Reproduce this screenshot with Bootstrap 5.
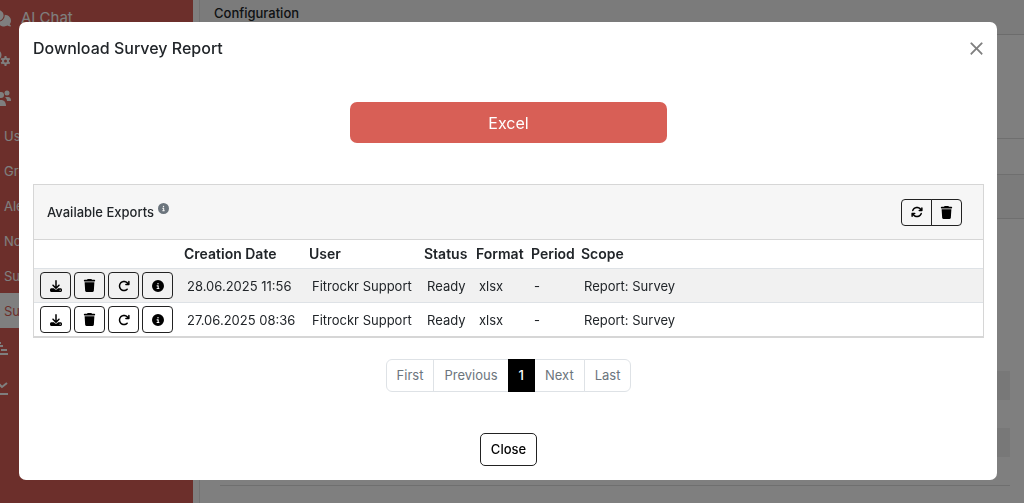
<!DOCTYPE html>
<html lang="en">
<head>
<meta charset="utf-8">
<meta name="viewport" content="width=device-width, initial-scale=1">
<title>Download Survey Report</title>
<link href="https://cdn.jsdelivr.net/npm/bootstrap@5.3.0/dist/css/bootstrap.min.css" rel="stylesheet">
<style>
  :root { --brand: #d85f56; }
  body { font-family: Inter, "Liberation Sans", sans-serif; font-size: 13px; line-height: 20px; overflow: hidden; }
  svg { fill: currentColor; display: block; }

  .side { width: 193px; min-height: calc(100vh + 2px); margin-top: -2px; background: var(--brand); }
  .side a { display: flex; align-items: center; white-space: nowrap; color: #fff; text-decoration: none; }
  .side .top-item { height: 40px; font-size: 15px; gap: 10px; margin-left: -10px; }
  .side .sub-item { height: 35px; padding-left: 4px; }
  .side .sub-item.active { background: #fff; color: var(--brand); }

  .page-card { border-left: 1px solid #e4e4e4; margin-left: 6px; }
  .page-head { background: #f7f7f7; border-bottom: 1px solid #d9d9d9; height: 35px; padding: 3px 14px; font-weight: 500; }
  .pane-a { height: 104px; border-bottom: 1px solid #dfdfdf; }
  .pane-b { height: 36px; border-bottom: 1px solid #dfdfdf; }
  .pane-c { height: 44px; background: #f7f7f7; border-bottom: 1px solid #dfdfdf; }
  .back-list { margin: 152px 14px 0 20px; border-bottom: 1px solid #dfdfdf; }
  .back-list div { height: 28px; }
  .back-list div:nth-child(odd) { background: #f0f0f0; height: 29px; }

  .survey-modal { padding: 22px 27px 0 19px; }
  .survey-modal .modal-dialog { max-width: none; margin: 0; }
  .survey-modal .modal-content { border: 0; border-radius: 7px; }
  .survey-modal .modal-header { border: 0; padding: 14px 13px 14px 14px; }
  .survey-modal .modal-title { font-size: 16px; line-height: 24px; font-weight: 500; }
  .survey-modal .btn-close { padding: 0; margin: 0; width: 15px; height: 15px; background-size: 15px; }
  .survey-modal .modal-body { padding: 28px 13px 14px 14px; }

  .btn-excel { width: 33.4%; height: 41px; background: var(--brand); color: #fff; border-radius: 7px; font-size: 16px; padding: 0; margin-bottom: 41px; }
  .btn-excel:hover { background: #c6524a; color: #fff; }
  .btn-line { border: 1px solid #222; color: #000; background: transparent; border-radius: 4px; }
  .btn-line:hover { background: #000; color: #fff; }
  .btn-tool { width: 31px; height: 27px; padding: 0; display: inline-flex; align-items: center; justify-content: center; }
  .acts { gap: 3px; }

  .exports { border: 1px solid #d6d6d6; border-bottom-width: 2px; }
  .exports-head { background: #f6f6f6; border-bottom: 1px solid #d6d6d6; height: 55px; padding: 0 21px 0 13px; font-weight: 500; }
  .info-mark { color: #6c757d; margin-top: -8px; }
  .exports table { --bs-table-striped-bg: #f1f1f1; table-layout: fixed; }
  .exports th { padding: 4px 3px; font-size: 14px; font-weight: 600; white-space: nowrap; border-color: #dee2e6; }
  .exports td { padding: 3px 6px; white-space: nowrap; vertical-align: middle; border-color: #dee2e6; }
  .exports tbody tr:last-child td { border-bottom: 0; }

  .pagination { --bs-pagination-padding-x: 10px; --bs-pagination-padding-y: 6px; --bs-pagination-font-size: 13px;
    --bs-pagination-border-radius: 6px; --bs-pagination-active-bg: #000; --bs-pagination-active-border-color: #000;
    --bs-pagination-disabled-bg: #fff; --bs-pagination-disabled-color: #6c757d; --bs-pagination-border-color: #dee2e6;
    --bs-pagination-disabled-border-color: #dee2e6; line-height: 19px; margin: 21px 0 41px; }
  .pagination .active { font-weight: 500; }
  .btn-close-modal { font-size: 13px; line-height: 19px; padding: 6px 10px; font-weight: 500; border-radius: 5px; }
</style>
</head>
<body>
<svg width="0" height="0" class="position-absolute" aria-hidden="true">
  <symbol id="i-download" viewBox="0 0 512 512"><path d="M288 32c0-17.700-14.300-32-32-32s-32 14.300-32 32V274.700l-73.400-73.400c-12.500-12.500-32.800-12.500-45.300 0s-12.500 32.800 0 45.300l128 128c12.500 12.500 32.800 12.500 45.300 0l128-128c12.500-12.500 12.500-32.800 0-45.300s-32.800-12.500-45.300 0L288 274.700V32zM64 352c-35.300 0-64 28.700-64 64v32c0 35.300 28.700 64 64 64H448c35.300 0 64-28.700 64-64V416c0-35.300-28.700-64-64-64H346.500l-45.300 45.300c-25 25-65.500 25-90.500 0L165.500 352H64zm368 56a24 24 0 1 1 0 48 24 24 0 1 1 0-48z"/></symbol>
  <symbol id="i-trash" viewBox="0 0 448 512"><path d="M135.200 17.700L128 32H32C14.300 32 0 46.300 0 64S14.300 96 32 96H416c17.700 0 32-14.300 32-32s-14.300-32-32-32H320l-7.200-14.300C307.400 6.800 296.300 0 284.200 0H163.800c-12.100 0-23.200 6.800-28.600 17.700zM416 128H32L53.200 467c1.600 25.300 22.600 45 47.900 45H346.900c25.300 0 46.300-19.700 47.900-45L416 128z"/></symbol>
  <symbol id="i-redo" viewBox="0 0 512 512"><path d="M386.300 160H336c-17.700 0-32 14.300-32 32s14.300 32 32 32H464c17.700 0 32-14.300 32-32V64c0-17.700-14.300-32-32-32s-32 14.300-32 32v51.200L414.400 97.600c-87.500-87.500-229.300-87.500-316.800 0s-87.500 229.300 0 316.800s229.300 87.500 316.800 0c12.500-12.500 12.500-32.800 0-45.300s-32.800-12.500-45.300 0c-62.500 62.500-163.800 62.500-226.300 0s-62.500-163.800 0-226.300s163.800-62.500 226.300 0L386.300 160z"/></symbol>
  <symbol id="i-info" viewBox="0 0 512 512"><path d="M256 512A256 256 0 1 0 256 0a256 256 0 1 0 0 512zM216 336h24V272H216c-13.300 0-24-10.700-24-24s10.700-24 24-24h48c13.300 0 24 10.700 24 24v88h8c13.300 0 24 10.700 24 24s-10.700 24-24 24H216c-13.300 0-24-10.700-24-24s10.700-24 24-24zm40-208a32 32 0 1 1 0 64 32 32 0 1 1 0-64z"/></symbol>
  <symbol id="i-sync" viewBox="0 0 512 512"><path d="M105.100 202.600c7.700-21.800 20.200-42.300 37.800-59.800c62.500-62.500 163.800-62.500 226.300 0L386.300 160H352c-17.700 0-32 14.300-32 32s14.300 32 32 32H463.900c17.700 0 32-14.300 32-32V80c0-17.700-14.300-32-32-32s-32 14.300-32 32v35.200L414.400 97.600c-87.500-87.500-229.300-87.500-316.800 0C73.200 122 55.600 150.700 44.800 181.400c-5.900 16.700 2.900 34.900 19.500 40.800s34.900-2.900 40.800-19.500zM39 289.300c-5 1.500-9.800 4.200-13.700 8.200c-4 4-6.700 8.800-8.100 14c-.3 1.200-.6 2.500-.8 3.800c-.3 1.700-.4 3.400-.4 5.100V432c0 17.700 14.300 32 32 32s32-14.300 32-32V396.900l17.600 17.500c87.500 87.400 229.300 87.400 316.700 0c24.400-24.400 42.100-53.100 52.900-83.700c5.900-16.700-2.900-34.900-19.500-40.800s-34.900 2.900-40.800 19.500c-7.700 21.800-20.200 42.300-37.800 59.800c-62.500 62.500-163.800 62.500-226.300 0l-.1-.1L125.600 352H160c17.700 0 32-14.300 32-32s-14.300-32-32-32H48.400c-1.600 0-3.200 .1-4.800 .3s-3.100 .5-4.600 1z"/></symbol>
  <symbol id="i-chat" viewBox="0 0 640 512"><path d="M208 352c114.900 0 208-78.800 208-176S322.900 0 208 0S0 78.800 0 176c0 38.600 14.700 74.300 39.600 103.400c-3.500 9.400-8.700 17.700-14.200 24.700L7 323c-6 4-8 11-6 18s8 11 15 11c21.800 0 43.800-5.600 62.100-12.500c9.200-3.500 17.800-7.400 25.300-11.400C134.100 343.300 169.800 352 208 352zM448 176c0 112.300-99.100 196.900-216.500 207C255.800 457.400 336.400 512 432 512c38.200 0 73.900-8.700 104.700-23.900c7.500 4 16 7.900 25.200 11.400c18.300 6.900 40.300 12.500 62.100 12.500c6.900 0 13.100-4.500 15.200-11.100c2.100-6.600-.2-13.800-5.800-17.900l-18.900-18.900c-5.500-7-10.700-15.400-14.200-24.700c24.900-29 39.600-64.700 39.600-103.400c0-92.800-84.900-168.900-192.600-175.500c.4 5.100 .6 10.300 .6 15.500z"/></symbol>
</svg>

<div class="d-flex">
  <nav class="side flex-shrink-0" aria-label="Main">
    <a class="top-item" href="#"><svg width="21" height="18"><use href="#i-chat"/></svg>AI Chat</a>
    <a class="top-item" href="#" aria-label="Settings">
      <svg width="20" height="22" viewBox="0 0 20 20"><circle cx="6" cy="7" r="4" fill="none" stroke="currentColor" stroke-width="3"/><circle cx="15.500" cy="13" r="2.500" fill="none" stroke="currentColor" stroke-width="2"/><path d="M14.500 8h2v3h-2zM14.500 15h2v3h-2z M10.700 11.400l1-1.700 2.300 1.300-1 1.700zM17 15l1-1.700 2.300 1.300-1 1.700zM10.700 14.600l1 1.700 2.300-1.300-1-1.700zM17 11l1 1.700 2.300-1.300-1-1.700z"/></svg></a>
    <a class="top-item" href="#" aria-label="Administration">
      <svg width="21" height="18" viewBox="0 0 21 18"><circle cx="17" cy="4" r="2.500"/><circle cx="11" cy="6" r="3"/><path d="M3 17c0-4 2-6 6-6h2c3 0 5 2 5 6zM15 8h3c2 0 3 1 3 4h-4c0-2-1-3-2-4z"/></svg></a>
    <a class="sub-item" href="#">Users</a>
    <a class="sub-item" href="#">Groups</a>
    <a class="sub-item" href="#">Alerts</a>
    <a class="sub-item" href="#">Notifications</a>
    <a class="sub-item" href="#">Surveys</a>
    <a class="sub-item active" href="#">Survey Reports</a>
    <a class="top-item" href="#" aria-label="Plans">
      <svg width="18" height="14" viewBox="0 0 18 14"><path d="M0 12h18v2H0zM8 4h5v2H8zM11 8h6v2h-6zM6 1h5v2H6z"/></svg></a>
    <a class="top-item" href="#" aria-label="Analytics">
      <svg width="18" height="14" viewBox="0 0 18 14"><path d="M0 12h18v2H0z"/><path d="M4 2l3-1 5 5 5-4" fill="none" stroke="currentColor" stroke-width="2"/></svg></a>
  </nav>
  <main class="flex-grow-1 page-card">
    <div class="page-head">Configuration</div>
    <div class="pane-a"></div>
    <div class="pane-b"></div>
    <div class="pane-c"></div>
    <div class="back-list"><div></div><div></div><div></div><div></div></div>
  </main>
</div>

<div class="modal-backdrop show"></div>
<div class="modal survey-modal d-block" role="dialog" aria-modal="true" aria-labelledby="dlgTitle">
  <div class="modal-dialog">
    <div class="modal-content">
      <div class="modal-header">
        <h1 class="modal-title" id="dlgTitle">Download Survey Report</h1>
        <button type="button" class="btn-close" aria-label="Dismiss"></button>
      </div>
      <div class="modal-body text-center">
        <button type="button" class="btn btn-excel">Excel</button>
        <section class="exports text-start">
          <div class="exports-head d-flex align-items-center">
            <span>Available Exports</span>
            <svg class="info-mark ms-1" width="11" height="11"><use href="#i-info"/></svg>
            <div class="btn-group ms-auto">
              <button type="button" class="btn btn-line btn-tool" aria-label="Refresh"><svg width="12" height="12"><use href="#i-sync"/></svg></button>
              <button type="button" class="btn btn-line btn-tool" aria-label="Delete all"><svg width="13" height="13"><use href="#i-trash"/></svg></button>
            </div>
          </div>
          <table class="table table-striped mb-0">
            <colgroup><col style="width:147px"><col style="width:125px"><col style="width:115px"><col style="width:52px"><col style="width:55px"><col style="width:50px"><col></colgroup>
            <thead><tr><th></th><th>Creation Date</th><th>User</th><th>Status</th><th>Format</th><th>Period</th><th>Scope</th></tr></thead>
            <tbody>
              <tr>
                <td><div class="d-flex acts">
                  <button type="button" class="btn btn-line btn-tool" aria-label="Download"><svg width="12" height="12"><use href="#i-download"/></svg></button>
                  <button type="button" class="btn btn-line btn-tool" aria-label="Delete"><svg width="13" height="13"><use href="#i-trash"/></svg></button>
                  <button type="button" class="btn btn-line btn-tool" aria-label="Repeat"><svg width="12" height="12"><use href="#i-redo"/></svg></button>
                  <button type="button" class="btn btn-line btn-tool" aria-label="Details"><svg width="12" height="12"><use href="#i-info"/></svg></button>
                </div></td>
                <td>28.06.2025 11:56</td><td>Fitrockr Support</td><td>Ready</td><td>xlsx</td><td>-</td><td>Report: Survey</td>
              </tr>
              <tr>
                <td><div class="d-flex acts">
                  <button type="button" class="btn btn-line btn-tool" aria-label="Download"><svg width="12" height="12"><use href="#i-download"/></svg></button>
                  <button type="button" class="btn btn-line btn-tool" aria-label="Delete"><svg width="13" height="13"><use href="#i-trash"/></svg></button>
                  <button type="button" class="btn btn-line btn-tool" aria-label="Repeat"><svg width="12" height="12"><use href="#i-redo"/></svg></button>
                  <button type="button" class="btn btn-line btn-tool" aria-label="Details"><svg width="12" height="12"><use href="#i-info"/></svg></button>
                </div></td>
                <td>27.06.2025 08:36</td><td>Fitrockr Support</td><td>Ready</td><td>xlsx</td><td>-</td><td>Report: Survey</td>
              </tr>
            </tbody>
          </table>
        </section>
        <nav aria-label="Export pages">
          <ul class="pagination justify-content-center">
            <li class="page-item disabled"><a class="page-link" href="#">First</a></li>
            <li class="page-item disabled"><a class="page-link" href="#">Previous</a></li>
            <li class="page-item active"><a class="page-link" href="#">1</a></li>
            <li class="page-item disabled"><a class="page-link" href="#">Next</a></li>
            <li class="page-item disabled"><a class="page-link" href="#">Last</a></li>
          </ul>
        </nav>
        <button type="button" class="btn btn-line btn-close-modal">Close</button>
      </div>
    </div>
  </div>
</div>
<script src="https://cdn.jsdelivr.net/npm/bootstrap@5.3.0/dist/js/bootstrap.bundle.min.js"></script>
</body>
</html>
